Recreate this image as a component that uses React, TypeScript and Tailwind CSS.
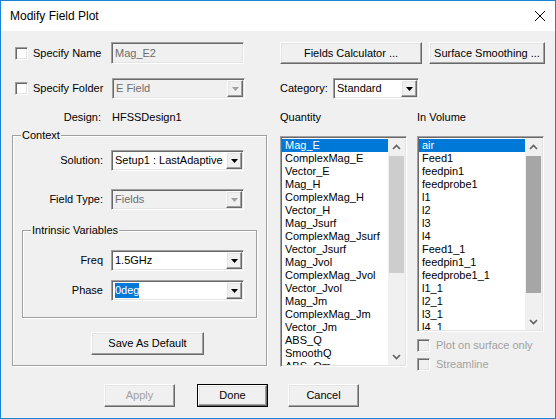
const sunken =
  'border border-t-[#a0a0a0] border-l-[#a0a0a0] border-r-white border-b-white shadow-[inset_1px_1px_0_#696969,inset_-1px_-1px_0_#e3e3e3]';
const raised =
  'border border-t-white border-l-white border-r-[#696969] border-b-[#696969] shadow-[inset_-1px_-1px_0_#a0a0a0,inset_1px_1px_0_#e3e3e3]';

function Arrow({ disabled }: { disabled?: boolean }) {
  return (
    <svg width="7" height="4" viewBox="0 0 7 4">
      <path d="M0 0h7L3.5 4z" fill={disabled ? '#a0a0a0' : '#000'} />
    </svg>
  );
}

function Chevron({ up }: { up?: boolean }) {
  return (
    <svg width="9" height="6" viewBox="0 0 9 6">
      <path d={up ? 'M1 5L4.5 1.5L8 5' : 'M1 1L4.5 4.5L8 1'} fill="none" stroke="#606060" strokeWidth="1.6" />
    </svg>
  );
}

function Combo({ value, w, disabled, selected }: { value: string; w: string; disabled?: boolean; selected?: boolean }) {
  return (
    <div className={`${w} h-[21px] ${sunken} ${disabled ? 'bg-[#f0f0f0]' : 'bg-white'} flex p-[1px]`}>
      <div className={`flex-1 flex items-center pl-[2px] ${disabled ? 'text-[#6d6d6d]' : 'text-black'}`}>
        {selected ? <span className="bg-[#0078d7] text-white leading-[15px]">{value}</span> : value}
      </div>
      <div className={`w-[16px] h-full bg-[#f0f0f0] ${raised} flex items-center justify-center`}>
        <Arrow disabled={disabled} />
      </div>
    </div>
  );
}

function Btn({ children, w, h = 'h-[23px]', disabled, isDefault }: { children: string; w: string; h?: string; disabled?: boolean; isDefault?: boolean }) {
  const inner = (
    <div className={`w-full h-full bg-[#f0f0f0] ${raised} flex items-center justify-center ${disabled ? 'text-[#a0a0a0]' : 'text-black'}`}>
      {children}
    </div>
  );
  if (isDefault) return <div className={`${w} ${h} border border-black`}>{inner}</div>;
  return <div className={`${w} ${h}`}>{inner}</div>;
}

function Check({ label, disabled }: { label: string; disabled?: boolean }) {
  return (
    <div className="flex items-center">
      <div className={`w-[13px] h-[13px] ${sunken} ${disabled ? 'bg-[#f0f0f0]' : 'bg-white'}`} />
      <span className={`ml-[6px] ${disabled ? 'text-[#a0a0a0]' : 'text-black'}`}>{label}</span>
    </div>
  );
}

function ListBox({ items, h, thumb, thumbColor }: { items: string[]; h: string; thumb: string; thumbColor: string }) {
  return (
    <div className={`w-[127px] ${h} ${sunken} bg-white flex p-[1px]`}>
      <div className="flex-1 overflow-hidden pt-[1px]">
        {items.map((it, i) => (
          <div key={it} className={`h-[13px] leading-[13px] pl-[3px] ${i === 0 ? 'bg-[#0078d7] text-white' : 'text-black'}`}>
            {it}
          </div>
        ))}
      </div>
      <div className="w-[17px] bg-[#f0f0f0] flex flex-col">
        <div className="h-[17px] flex items-center justify-center"><Chevron up /></div>
        <div className="flex-1 px-[1px] pt-[1px]">
          <div className={`${thumb} ${thumbColor}`} />
        </div>
        <div className="h-[17px] flex items-center justify-center"><Chevron /></div>
      </div>
    </div>
  );
}

const quantities = [
  'Mag_E', 'ComplexMag_E', 'Vector_E', 'Mag_H', 'ComplexMag_H', 'Vector_H', 'Mag_Jsurf', 'ComplexMag_Jsurf',
  'Vector_Jsurf', 'Mag_Jvol', 'ComplexMag_Jvol', 'Vector_Jvol', 'Mag_Jm', 'ComplexMag_Jm', 'Vector_Jm', 'ABS_Q',
  'SmoothQ', 'ABS_Qm',
];
const volumes = [
  'air', 'Feed1', 'feedpin1', 'feedprobe1', 'l1', 'l2', 'l3', 'l4', 'Feed1_1', 'feedpin1_1', 'feedprobe1_1',
  'l1_1', 'l2_1', 'l3_1', 'l4_1',
];

export default function App() {
  return (
    <div className="w-[556px] h-[419px] border border-[#1883d7] flex flex-col whitespace-nowrap text-[11px] leading-[13px] font-['Liberation_Sans',Arial,sans-serif] text-black">
      <div className="h-[30px] bg-white flex items-center justify-between pl-[9px] pr-[10px]">
        <span className="text-[12px]">Modify Field Plot</span>
        <svg width="10" height="10" viewBox="0 0 10 10">
          <path d="M0 0L10 10M10 0L0 10" stroke="#000" strokeWidth="1" />
        </svg>
      </div>

      <div className="flex-1 bg-[#f0f0f0] flex flex-col">
        <div className="h-[353px] flex pt-[11px]">
          {/* left column */}
          <div className="w-[266px] flex flex-col">
            <div className="h-[22px] flex items-center pl-[14px]">
              <div className={`w-[13px] h-[13px] ${sunken} bg-white`} />
              <span className="ml-[5px] w-[78px]">Specify Name</span>
              <div className={`w-[133px] h-[22px] ${sunken} bg-[#f0f0f0] flex items-center pl-[3px] text-[#6d6d6d]`}>Mag_E2</div>
            </div>
            <div className="h-[21px] mt-[14px] flex items-center pl-[14px]">
              <div className={`w-[13px] h-[13px] ${sunken} bg-white`} />
              <span className="ml-[5px] w-[79px]">Specify Folder</span>
              <Combo value="E Field" w="w-[133px]" disabled />
            </div>
            <div className="h-[13px] mt-[12px] flex">
              <span className="w-[100px] text-right">Design:</span>
              <span className="ml-[11px]">HFSSDesign1</span>
            </div>

            <div className="relative ml-[11px] mt-[11px] w-[255px] h-[231px] border border-[#a0a0a0] shadow-[inset_1px_1px_0_#fff,1px_1px_0_#fff] flex flex-col">
              <span className="absolute left-[8px] top-[-7px] bg-[#f0f0f0] px-[1px]">Context</span>
              <div className="flex items-center mt-[14px]">
                <span className="w-[90px] text-right">Solution:</span>
                <div className="ml-[8px]"><Combo value="Setup1 : LastAdaptive" w="w-[133px]" /></div>
              </div>
              <div className="flex items-center mt-[18px]">
                <span className="w-[90px] text-right">Field Type:</span>
                <div className="ml-[8px]"><Combo value="Fields" w="w-[133px]" disabled /></div>
              </div>

              <div className="relative ml-[9px] mt-[20px] w-[235px] h-[88px] border border-[#a0a0a0] shadow-[inset_1px_1px_0_#fff,1px_1px_0_#fff] flex flex-col">
                <span className="absolute left-[8px] top-[-7px] bg-[#f0f0f0] px-[1px]">Intrinsic Variables</span>
                <div className="flex items-center mt-[19px]">
                  <span className="w-[80px] text-right">Freq</span>
                  <div className="ml-[8px]"><Combo value="1.5GHz" w="w-[133px]" /></div>
                </div>
                <div className="flex items-center mt-[9px]">
                  <span className="w-[80px] text-right">Phase</span>
                  <div className="ml-[8px]"><Combo value="0deg" w="w-[133px]" selected /></div>
                </div>
              </div>

              <div className="ml-[78px] mt-[14px]">
                <Btn w="w-[113px]">Save As Default</Btn>
              </div>
            </div>
          </div>

          {/* right column */}
          <div className="ml-[13px] flex flex-col">
            <div className="flex gap-[7px]">
              <Btn w="w-[142px]" h="h-[22px]">Fields Calculator ...</Btn>
              <Btn w="w-[116px]" h="h-[22px]">Surface Smoothing ...</Btn>
            </div>
            <div className="h-[21px] mt-[14px] flex items-center">
              <span className="w-[53px]">Category:</span>
              <Combo value="Standard" w="w-[86px]" />
            </div>
            <div className="h-[13px] mt-[12px] flex">
              <span className="w-[137px]">Quantity</span>
              <span>In Volume</span>
            </div>
            <div className="mt-[12px] flex items-start gap-[10px]">
              <ListBox items={quantities} h="h-[231px]" thumb="h-[117px]" thumbColor="bg-[#cdcdcd]" />
              <div className="flex flex-col">
                <ListBox items={volumes} h="h-[196px]" thumb="h-[137px]" thumbColor="bg-[#a6a6a6]" />
                <div className="mt-[7px]"><Check label="Plot on surface only" disabled /></div>
                <div className="mt-[6px]"><Check label="Streamline" disabled /></div>
              </div>
            </div>
          </div>
        </div>

        <div className="flex pl-[103px]">
          <Btn w="w-[71px]" disabled>Apply</Btn>
          <div className="ml-[22px]"><Btn w="w-[71px]" isDefault>Done</Btn></div>
          <div className="ml-[20px]"><Btn w="w-[71px]">Cancel</Btn></div>
        </div>
      </div>
    </div>
  );
}
